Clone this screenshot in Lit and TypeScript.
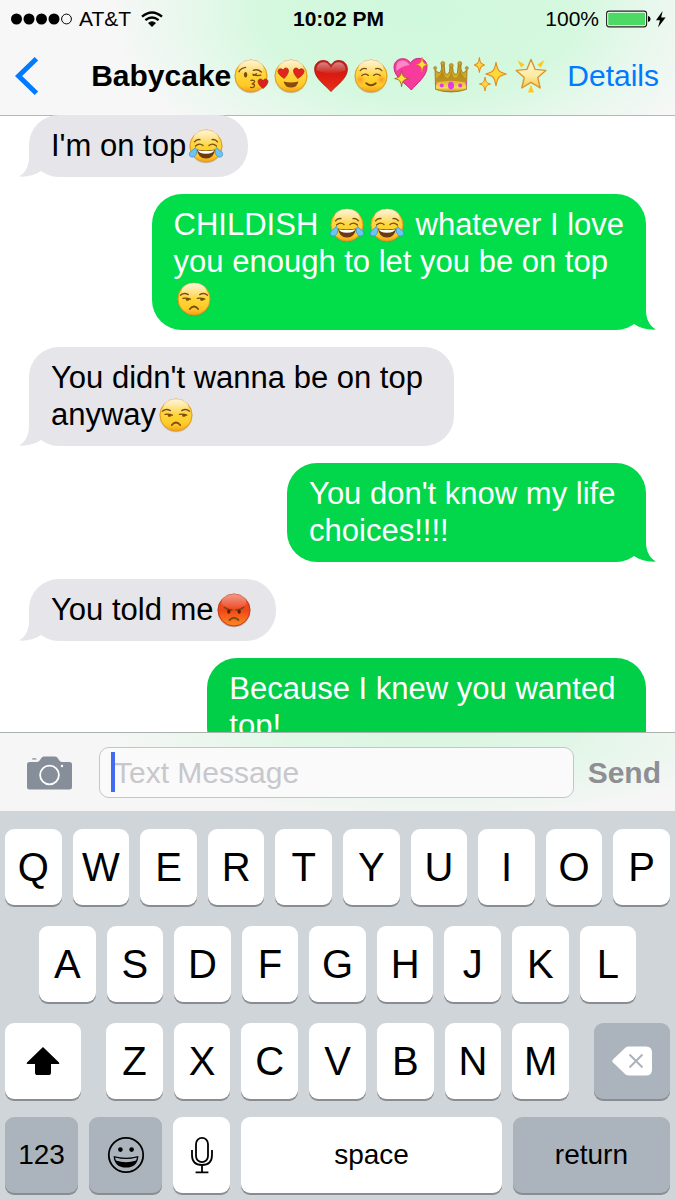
import { LitElement, css, html, svg } from 'lit'
import { customElement, property, state } from 'lit/decorators.js'
import { classMap } from 'lit/directives/class-map.js'

interface Message {
  from: 'me' | 'them';
  text: string;
  tone?: string;
}

const MESSAGES: Message[] = [
  { from: 'them', text: "I'm on top😂" },
  { from: 'me', tone: 'fresh', text: 'CHILDISH 😂😂 whatever I love\nyou enough to let you be on top\n😒' },
  { from: 'them', text: "You didn't wanna be on top \nanyway😒" },
  { from: 'me', tone: 'mid', text: "You don't know my life \nchoices!!!!" },
  { from: 'them', text: 'You told me😡' },
  { from: 'me', tone: 'deep', text: 'Because I knew you wanted \ntop!' },
]

const CONTACT = 'Babycake😘😍❤️☺️💖👑✨🌟'

const face = svg`
  <circle cx="18" cy="18.8" r="16.4" fill="#8a7a50" opacity="0.35" />
  <circle cx="18" cy="18" r="16" fill="url(#skin)" stroke="#e59a1c" stroke-width="1" />
  <ellipse cx="18" cy="9.5" rx="12.5" ry="7.5" fill="url(#gloss)" />
`

const smallHeart = 'M0 4.6C-3 2.2-5-.2-5-2.4C-5-5.4-1.3-6-.0-3.2C1.3-6 5-5.4 5-2.4C5-.2 3 2.2 0 4.6Z'
const spark = 'M0-7C.7-2 1.6-1 5.5 0C1.6 1 .7 2 0 7C-.7 2-1.6 1-5.5 0C-1.6-1-.7-2 0-7Z'

const EMOJI: Record<string, { label: string; art: unknown }> = {
  '😂': {
    label: 'face with tears of joy',
    art: svg`
      ${face}
      <path class="ink" d="M6.5 13.8Q8.5 11 12 11.6M29.5 13.8Q27.5 11 24 11.6" />
      <path class="ink" d="M7.5 18Q11.5 14.6 15 17.6M28.5 18Q24.5 14.6 21 17.6" />
      <path d="M9 21.5Q18 23.5 27 21.5Q26 30.5 18 30.5Q10 30.5 9 21.5Z" fill="#6b3a10" />
      <path d="M10 22.2Q18 24 26 22.2Q25.6 25.6 18 25.8Q10.4 25.6 10 22.2Z" fill="#fff" />
      <path d="M7.5 19.5C9.5 22.5 9 28 5.2 29C1 29.8.4 25.6 2.6 23.6Q5 22 7.5 19.5Z" fill="#6cc3f5" stroke="#2f8fd8" stroke-width="0.7" />
      <path d="M28.5 19.5C26.5 22.5 27 28 30.8 29C35 29.8 35.6 25.6 33.4 23.6Q31 22 28.5 19.5Z" fill="#6cc3f5" stroke="#2f8fd8" stroke-width="0.7" />
    `,
  },
  '😒': {
    label: 'unamused face',
    art: svg`
      ${face}
      <path class="ink" d="M4.5 14.2Q8 11.2 12.3 13.6M31.5 14.2Q28 11.2 23.7 13.6" />
      <path class="ink" d="M7 17.4Q11 16.8 14.4 18.2M21.4 17.4Q25.4 16.8 28.8 18.2" />
      <path d="M9.6 17.3L14 18.2Q12.4 20.4 10 19.4ZM24 17.3L28.4 18.2Q26.8 20.4 24.4 19.4Z" fill="#7a4a12" />
      <path class="ink thick" d="M13.8 28Q18 23 22.2 28" />
    `,
  },
  '😡': {
    label: 'pouting face',
    art: svg`
      <circle cx="18" cy="18.8" r="16.4" fill="#6b5050" opacity="0.35" />
      <circle cx="18" cy="18" r="16" fill="url(#rage)" stroke="#c23a12" stroke-width="1" />
      <ellipse cx="18" cy="9.5" rx="12.5" ry="7.5" fill="url(#gloss)" opacity="0.55" />
      <path class="ink thick" d="M8.5 15.4Q11 17.6 15.8 18.2M27.5 15.4Q25 17.6 20.2 18.2" />
      <ellipse cx="12.8" cy="19.6" rx="1.6" ry="2.2" fill="#5f1d06" />
      <ellipse cx="23.2" cy="19.6" rx="1.6" ry="2.2" fill="#5f1d06" />
      <path class="ink thick" d="M13.5 28Q18 23.6 22.5 28" />
    `,
  },
  '😘': {
    label: 'face blowing a kiss',
    art: svg`
      ${face}
      <path class="ink" d="M6 13.8Q7.5 10.4 12.6 9.4M20.4 12.4Q24.4 10.6 28.4 14" />
      <ellipse cx="12.6" cy="16.8" rx="1.7" ry="2.7" fill="#7a4a12" />
      <path class="ink" d="M20 16.2Q23 18.4 27.8 17.2M20.4 17.4L23.6 15.8" />
      <path class="ink" d="M18 22.4Q22.2 21.8 21.4 24Q20.8 25.6 18.8 25.8Q22 26.2 21.4 28.2Q20.6 30 17.6 29.4" />
      <path d=${smallHeart} transform="translate(30 26)" fill="#d8221c" stroke="#a51510" stroke-width="0.6" />
    `,
  },
  '😍': {
    label: 'smiling face with heart eyes',
    art: svg`
      ${face}
      <path d=${smallHeart} transform="translate(10.6 15.6) rotate(-8) scale(1.05)" fill="#e2261d" stroke="#a51510" stroke-width="0.6" />
      <path d=${smallHeart} transform="translate(25.4 15.6) rotate(8) scale(1.05)" fill="#e2261d" stroke="#a51510" stroke-width="0.6" />
      <path d="M10.6 23.4Q18 25.6 25.4 23.4Q24 29.6 18 29.6Q12 29.6 10.6 23.4Z" fill="#8a4a12" />
    `,
  },
  '❤️': {
    label: 'red heart',
    art: svg`
      <path d="M18 33.6C13 27.4 1.6 20.6 1.6 11.4C1.6 1.2 14.6-.6 18 7.6C21.4-.6 34.4 1.2 34.4 11.4C34.4 20.6 23 27.4 18 33.6Z" fill="url(#love)" stroke="#a8201a" stroke-width="0.9" />
      <path d="M3.4 12.6C2.8 3.6 14 .8 18 10C22 .8 33.2 3.6 32.6 12.6Q18 18 3.4 12.6Z" fill="url(#gloss)" opacity="0.6" />
    `,
  },
  '☺️': {
    label: 'smiling face',
    art: svg`
      ${face}
      <circle cx="7.4" cy="21.6" r="5" fill="url(#blush)" />
      <circle cx="28.6" cy="21.6" r="5" fill="url(#blush)" />
      <path class="ink" d="M7.2 12.6Q10 9.6 13.4 10.8M28.8 12.6Q26 9.6 22.6 10.8" />
      <path class="ink" d="M8.8 17.6Q12 14.8 15.4 17.4M27.2 17.6Q24 14.8 20.6 17.4" />
      <path class="ink thick" d="M13.2 25.2Q18 29.2 22.8 25.2" />
    `,
  },
  '💖': {
    label: 'sparkling heart',
    art: svg`
      <path d="M18.4 32C13 25.6 1 19.4 1 9.4C1-.8 14.2-2 17.6 5.4C20.8-2 34-1.6 34 9C34 18.6 23.4 25.6 18.4 32Z" fill="#f93a9d" stroke="#c71f76" stroke-width="0.9" />
      <path d="M3.4 8.6C3.6 1.4 13 .4 16.4 7Q9 8 3.4 13Z" fill="#fff" opacity="0.4" />
      <path d=${spark} transform="translate(29 6.6) scale(1 1.05)" fill="#ffdf3a" stroke="#d88a12" stroke-width="0.7" />
      <path d=${spark} transform="translate(8.6 20.6) scale(1.25 1.15)" fill="#ffdf3a" stroke="#8f5a10" stroke-width="0.7" />
    `,
  },
  '👑': {
    label: 'crown',
    art: svg`
      <path d="M2 11.6Q7 18 8.6 11L8.4 5.4L11 5.4L12 15Q14.6 18 16.4 13.6L17.2 7L19.4 7L20.2 13.6Q21.8 18 24.4 15L25.4 5.4L28 5.4L28 11Q29.4 18 34 11.6L33.4 31.4Q18 36.6 2.6 31.4Z" fill="url(#gold)" stroke="#94701a" stroke-width="0.8" />
      <path d="M3 20Q7 19 9.4 11.4Q12 20.4 14.6 20Q17.2 19 18.2 12Q19.4 19 22 20Q25 20 27 11.4Q29.4 19 33 20L33 24.4Q18 21 3 24.4Z" fill="#a37c18" opacity="0.6" />
      <g fill="#c9a12a" stroke="#94701a" stroke-width="0.5">
        <circle cx="2.2" cy="10" r="1.6" /><circle cx="9.8" cy="5.4" r="2" /><circle cx="18.3" cy="7.4" r="2" />
        <circle cx="26.8" cy="5.4" r="2" /><circle cx="33.8" cy="10" r="1.6" />
      </g>
      <g fill="#e03be6">
        <ellipse cx="18" cy="27.6" rx="3" ry="3.8" /><circle cx="8.8" cy="27.4" r="2" /><circle cx="27.2" cy="27.4" r="2" />
        <ellipse cx="2.8" cy="25.4" rx="0.8" ry="1.4" /><ellipse cx="33.2" cy="25.4" rx="0.8" ry="1.4" />
      </g>
    `,
  },
  '✨': {
    label: 'sparkles',
    art: svg`
      <g fill="#ffd83a" stroke="#e58a1c">
        <path d=${spark} transform="translate(23 16) scale(1.9 1.7)" stroke-width="0.6" />
        <path d=${spark} transform="translate(6.4 7) scale(0.95 1.1)" stroke-width="1" />
        <path d=${spark} transform="translate(12 26) scale(1 1)" stroke-width="1" />
      </g>
    `,
  },
  '🌟': {
    label: 'glowing star',
    art: svg`
      <path d="M18 1.4L22.2 11.4L32.8 12.4L24.8 19.6L27.2 30L18 24.4L8.8 30L11.2 19.6L3.2 12.4L13.8 11.4Z" fill="url(#star)" stroke="#d8962a" stroke-width="1.4" stroke-linejoin="round" />
      <path d="M4.4 2.2L11.6 6.6L8.2 9.8ZM31.6 2L24.4 6.6L27.8 9.8ZM18 26.6L21 34.4L15 34.4Z" fill="#ffc81e" />
    `,
  },
}

const EMOJI_PATTERN = new RegExp(`(${Object.keys(EMOJI).join('|')})`, 'u')

// Splits a string so that every emoji becomes its own drawn glyph
function withEmoji(text: string) {
  return text
    .split(EMOJI_PATTERN)
    .filter((part) => part !== '')
    .map((part) => (EMOJI[part] ? html`<emoji-glyph symbol=${part}></emoji-glyph>` : part))
}

@customElement('emoji-glyph')
export class EmojiGlyph extends LitElement {
  @property({ type: String }) symbol = ''

  static styles = css`
    :host {
      display: inline-flex;
      flex: none;
      width: 36px;
      height: 36px;
      margin: -4px 2px;
      vertical-align: -8px;
      white-space: normal;
    }

    svg {
      display: block;
      overflow: visible;
    }

    .ink {
      fill: none;
      stroke: #7a4a12;
      stroke-width: 1.3;
      stroke-linecap: round;
    }

    .thick {
      stroke-width: 1.8;
    }
  `

  render() {
    const emoji = EMOJI[this.symbol]
    return html`
      <svg viewBox="0 0 36 36" width="36" height="36" role="img" aria-label=${emoji.label}>
        <defs>
          <linearGradient id="skin" x1="0" y1="0" x2="0" y2="1">
            <stop offset="0" stop-color="#fdd868" />
            <stop offset="0.55" stop-color="#fed433" />
            <stop offset="0.8" stop-color="#ffc927" />
            <stop offset="1" stop-color="#f6a01c" />
          </linearGradient>
          <linearGradient id="gloss" x1="0" y1="0" x2="0" y2="1">
            <stop offset="0" stop-color="#fff" stop-opacity="0.75" />
            <stop offset="1" stop-color="#fff" stop-opacity="0.05" />
          </linearGradient>
          <linearGradient id="rage" x1="0" y1="0" x2="0" y2="1">
            <stop offset="0" stop-color="#e8553a" />
            <stop offset="0.5" stop-color="#f0451a" />
            <stop offset="1" stop-color="#ff8a1e" />
          </linearGradient>
          <linearGradient id="love" x1="0" y1="0" x2="0" y2="1">
            <stop offset="0" stop-color="#b3201c" />
            <stop offset="0.5" stop-color="#dc1c10" />
            <stop offset="1" stop-color="#e8321a" />
          </linearGradient>
          <linearGradient id="gold" x1="0" y1="0" x2="0" y2="1">
            <stop offset="0" stop-color="#b8901e" />
            <stop offset="0.6" stop-color="#e0b62c" />
            <stop offset="0.85" stop-color="#f8dc5a" />
            <stop offset="1" stop-color="#b8861c" />
          </linearGradient>
          <linearGradient id="star" x1="0" y1="0" x2="0" y2="1">
            <stop offset="0" stop-color="#fff8d8" />
            <stop offset="0.6" stop-color="#fdeaa0" />
            <stop offset="1" stop-color="#f6c648" />
          </linearGradient>
          <radialGradient id="blush">
            <stop offset="0" stop-color="#ff8a2a" stop-opacity="0.8" />
            <stop offset="1" stop-color="#ff8a2a" stop-opacity="0" />
          </radialGradient>
        </defs>
        ${emoji.art}
      </svg>
    `
  }
}

@customElement('message-bubble')
export class MessageBubble extends LitElement {
  @property({ attribute: false }) message!: Message

  static styles = css`
    :host {
      display: flex;
    }

    .bubble {
      position: relative;
      padding: 12px 22px 13px;
      border-radius: 30px;
      background: var(--bubble);
      font-size: 31px;
      line-height: 37px;
      white-space: pre;
    }

    .them {
      --bubble: #e5e5ea;
      color: #000;
    }

    .me {
      --bubble: #02dd4a;
      margin-left: auto;
      color: #fff;
    }

    .mid {
      --bubble: #02d64a;
    }

    .deep {
      --bubble: #00cf47;
    }

    .tail {
      position: absolute;
      bottom: 0;
      left: -10px;
      fill: var(--bubble);
    }

    .me .tail {
      left: auto;
      right: -10px;
      transform: scaleX(-1);
    }
  `

  render() {
    const { from, tone, text } = this.message
    const classes = { bubble: true, [from]: true, ...(tone ? { [tone]: true } : {}) }
    return html`
      <div class=${classMap(classes)}><svg class="tail" width="30" height="30" viewBox="0 0 30 30" aria-hidden="true"><path d="M10 0V10C10 19 6.5 26 0 29.6C8 30.2 16 28 22 24L30 10Z" /></svg>${withEmoji(text)}</div>
    `
  }
}

@customElement('on-screen-keyboard')
export class OnScreenKeyboard extends LitElement {
  static styles = css`
    :host {
      display: flex;
      flex-direction: column;
      gap: 18px;
      padding: 18px 5px 7px;
      background: #d0d5da;
    }

    .row,
    .letters {
      display: flex;
      gap: 11px;
    }

    .middle {
      margin-top: 3px;
      padding: 0 34px;
    }

    .lower {
      gap: 25px;
      margin-top: 3px;
    }

    .letters {
      flex: 463 1 0;
    }

    .key {
      display: flex;
      flex: 57 1 0;
      align-items: center;
      justify-content: center;
      min-width: 0;
      height: 76px;
      padding: 0;
      border: 0;
      border-radius: 9px;
      background: #fff;
      box-shadow: 0 2px 0 #898c90;
      color: #000;
      font-family: inherit;
      font-size: 40px;
      line-height: 48px;
      cursor: pointer;
    }

    .side {
      flex-grow: 76;
    }

    .mode {
      flex-grow: 73;
    }

    .space {
      flex-grow: 260;
    }

    .return {
      flex-grow: 157;
    }

    .word {
      font-size: 28px;
    }

    .dark {
      background: #abb4bd;
    }
  `

  private _letters(keys: string) {
    return [...keys].map((k) => html`<button class="key" @click=${() => this._press(k)}>${k}</button>`)
  }

  private _press(key: string) {
    this.dispatchEvent(new CustomEvent('key-press', { detail: key, bubbles: true, composed: true }))
  }

  render() {
    return html`
      <div class="row">${this._letters('QWERTYUIOP')}</div>
      <div class="row middle">${this._letters('ASDFGHJKL')}</div>
      <div class="row lower">
        <button class="key side" aria-label="Shift">
          <svg width="34" height="30" viewBox="0 0 34 30" aria-hidden="true">
            <path d="M17 1L33 16.4Q34 18 32.4 18H25V26.4Q25 29 22.4 29H11.6Q9 29 9 26.4V18H1.6Q0 18 1 16.4Z" />
          </svg>
        </button>
        <div class="letters">${this._letters('ZXCVBNM')}</div>
        <button class="key side dark" aria-label="Delete" @click=${() => this._press('Backspace')}>
          <svg width="40" height="30" viewBox="0 0 40 30" aria-hidden="true">
            <path d="M13.6 1.4Q15 .5 17 .5H34Q40 .5 40 6.5V23.5Q40 29.5 34 29.5H17Q15 29.5 13.6 28.4L1 16.6Q-.4 15 1 13.4Z" fill="#fff" />
            <path d="M17.5 8.5L30.5 21.5M30.5 8.5L17.5 21.5" fill="none" stroke="#abb4bd" stroke-width="2" />
          </svg>
        </button>
      </div>
      <div class="row">
        <button class="key mode word dark">123</button>
        <button class="key mode dark" aria-label="Emoji">
          <svg width="38" height="38" viewBox="0 0 38 38" aria-hidden="true">
            <circle cx="19" cy="19" r="17.2" fill="none" stroke="#000" stroke-width="1.8" />
            <circle cx="13.4" cy="13.6" r="2.3" />
            <circle cx="24.6" cy="13.6" r="2.3" />
            <path d="M6.6 20Q19 23.4 31.4 20Q30.6 31.6 19 31.6Q7.4 31.6 6.6 20Z" />
            <path d="M8.2 21.6Q19 24.6 29.8 21.6Q29.8 23.4 29 24.4Q19 28 9 24.4Q8.2 23.4 8.2 21.6Z" fill="#abb4bd" />
          </svg>
        </button>
        <button class="key" aria-label="Dictate">
          <svg width="22" height="38" viewBox="0 0 22 38" fill="none" stroke="#000" stroke-width="1.8" aria-hidden="true">
            <rect x="5" y="1.9" width="12" height="24.2" rx="6" />
            <path d="M1 14V19Q1 29 11 29Q21 29 21 19V14M11 29V36M4.6 36.4H17.4" />
          </svg>
        </button>
        <button class="key space word" @click=${() => this._press(' ')}>space</button>
        <button class="key return word dark">return</button>
      </div>
    `
  }
}

@customElement('app-root')
export class AppRoot extends LitElement {
  @state() private draft = ''

  static styles = css`
    :host {
      display: flex;
      flex-direction: column;
      height: 100vh;
      overflow: hidden;
      background: #fff;
      color: #000;
      font-family: 'Liberation Sans', Arial, sans-serif;
    }

    header {
      position: relative;
      flex: none;
      margin-bottom: -1px;
      border-bottom: 1px solid #b2b8b4;
      background: radial-gradient(46% 150% at 62% 10%, #d0f8dc, #d5f8df 50%, #e6f8eb 72%, #f7f7f7);
    }

    .status {
      display: grid;
      grid-template-columns: 1fr auto 1fr;
      align-items: center;
      height: 37px;
      padding: 0 9px 0 11px;
      font-size: 21px;
    }

    .carrier,
    .power {
      display: flex;
      align-items: center;
      gap: 7px;
    }

    .wifi {
      margin-left: 3px;
    }

    .power {
      justify-content: flex-end;
    }

    .nav {
      display: flex;
      align-items: center;
      height: 78px;
      padding: 0 16px 0 14px;
      font-size: 30px;
    }

    .title {
      display: flex;
      flex: 1;
      align-items: center;
      justify-content: flex-end;
      margin: 0 16px 0 0;
      font-size: 30px;
      font-weight: bold;
      white-space: nowrap;
    }

    button {
      padding: 0;
      border: 0;
      background: none;
      font-family: inherit;
      cursor: pointer;
    }

    .back,
    .camera {
      display: flex;
    }

    a {
      color: #007aff;
      text-decoration: none;
    }

    .thread {
      display: flex;
      flex: 1;
      flex-direction: column;
      gap: 17px;
      min-height: 0;
      padding: 0 29px;
      overflow: hidden;
    }

    message-bubble {
      flex: none;
    }

    .composer {
      display: flex;
      flex: none;
      align-items: center;
      padding: 14px 14px 13px 27px;
      border-top: 1px solid #aab2ad;
      background: radial-gradient(48% 110% at 64% 0%, #daf6e2, #e2f6e8 45%, #f6f6f6);
    }

    .field {
      position: relative;
      display: flex;
      flex: 1;
      margin: 0 14px 0 27px;
    }

    input {
      box-sizing: border-box;
      width: 100%;
      height: 51px;
      padding: 0 14px;
      border: 1px solid #c3c5c9;
      border-radius: 10px;
      outline: none;
      background: #fafafa;
      color: #000;
      font-family: inherit;
      font-size: 30px;
    }

    input::placeholder {
      color: #c7c7cc;
      opacity: 1;
    }

    .caret {
      position: absolute;
      top: 5px;
      left: 12px;
      width: 4px;
      height: 40px;
      background: #426bf2;
    }

    .send {
      color: #8e8e93;
      font-size: 30px;
      font-weight: bold;
    }
  `

  private _onKey(e: CustomEvent<string>) {
    this.draft = e.detail === 'Backspace' ? this.draft.slice(0, -1) : this.draft + e.detail
  }

  private _onInput(e: Event) {
    this.draft = (e.target as HTMLInputElement).value
  }

  render() {
    return html`
      <header>
        <div class="status">
          <div class="carrier">
            <svg width="61" height="12" viewBox="0 0 61 12" role="img" aria-label="Signal strength">
              ${[5.5, 18, 30.5, 43].map((x) => svg`<circle cx=${x} cy="6" r="5.5" />`)}
              <circle cx="55.5" cy="6" r="4.9" fill="none" stroke="#000" stroke-width="1" />
            </svg>
            <span>AT&amp;T</span>
            <svg class="wifi" width="22" height="16" viewBox="0 0 22 16" role="img" aria-label="Wi-Fi">
              <path d="M1 5.6Q11-2.8 21 5.6M4.4 9.2Q11 3.6 17.6 9.2" fill="none" stroke="#000" stroke-width="2.4" />
              <path d="M7 11.9Q11 8.6 15 11.9L11 16Z" />
            </svg>
          </div>
          <b>10:02 PM</b>
          <div class="power">
            <span>100%</span>
            <svg width="60" height="18" viewBox="0 0 60 18" role="img" aria-label="Battery charging">
              <rect x="0.6" y="1.1" width="40" height="15.8" rx="2.6" fill="#fff" stroke="#222" stroke-width="1.1" />
              <rect x="2.2" y="2.7" width="36.8" height="12.6" rx="1" fill="#4cd964" />
              <path d="M42 6Q44.6 6.4 44.6 9Q44.6 11.6 42 12Z" />
              <path d="M56.6 1L50 10.2H54L52 17.4L59.6 7.6H55.2Z" />
            </svg>
          </div>
        </div>
        <nav class="nav">
          <button class="back" aria-label="Back">
            <svg width="25" height="38" viewBox="0 0 25 38" aria-hidden="true">
              <path d="M22.4 1.8L4.6 19L22.4 36.2" fill="none" stroke="#007aff" stroke-width="5" />
            </svg>
          </button>
          <h1 class="title">${withEmoji(CONTACT)}</h1>
          <a href="#details">Details</a>
        </nav>
      </header>

      <main class="thread">
        ${MESSAGES.map((m) => html`<message-bubble .message=${m}></message-bubble>`)}
      </main>

      <div class="composer">
        <button class="camera" aria-label="Take a photo">
          <svg width="45" height="34" viewBox="0 0 45 34" aria-hidden="true">
            <path d="M2.5 6H10Q12 6 13 4L14 2.4Q15 .5 17 .5H28Q30 .5 31 2.4L32 4Q33 6 35 6H42.5Q45 6 45 8.5V31Q45 33.5 42.5 33.5H2.5Q0 33.5 0 31V8.5Q0 6 2.5 6Z" fill="#868e99" />
            <path d="M5.6 2.2H9Q10 3.4 9.6 3.6H5Q5 2.8 5.6 2.2Z" fill="#868e99" />
            <circle cx="22.5" cy="19" r="9.4" fill="none" stroke="#fff" stroke-width="1.8" />
            <circle cx="35" cy="10" r="1.2" fill="#fff" />
          </svg>
        </button>
        <div class="field">
          <input
            type="text"
            aria-label="Text Message"
            placeholder="Text Message"
            .value=${this.draft}
            @input=${this._onInput}
          />
          ${this.draft ? '' : html`<span class="caret"></span>`}
        </div>
        <button class="send">Send</button>
      </div>

      <on-screen-keyboard @key-press=${this._onKey}></on-screen-keyboard>
    `
  }
}
